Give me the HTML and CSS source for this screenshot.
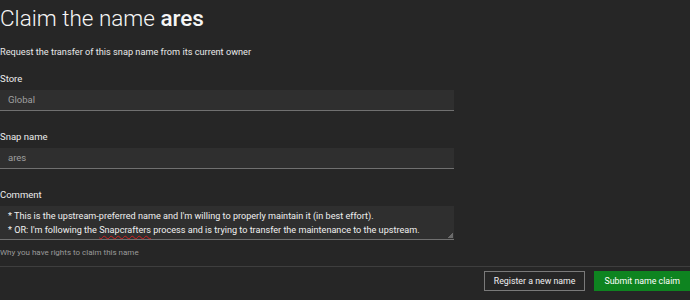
FILE: index.html
```html
<!DOCTYPE html>
<html lang="en">
<head>
<meta charset="utf-8">
<title>Claim the name ares</title>
<link rel="stylesheet" href="styles.css">
</head>
<body>
<main class="page">
  <h1 class="title">Claim the name <strong>ares</strong></h1>
  <p class="lead">Request the transfer of this snap name from its current owner</p>
  <div class="form">
    <div class="field">
      <label class="label">Store</label>
      <div class="input">Global</div>
    </div>
    <div class="field">
      <label class="label">Snap name</label>
      <div class="input">ares</div>
    </div>
    <div class="field">
      <label class="label">Comment</label>
      <div class="textarea">
        <div>* This is the upstream-preferred name and I'm willing to properly maintain it (in best effort).</div>
        <div>* OR: I'm following the <span class="misspelled">Snapcrafters</span> process and is trying to transfer the maintenance to the upstream.</div>
        <span class="grip"></span>
      </div>
      <p class="help">Why you have rights to claim this name</p>
    </div>
  </div>
  <footer class="actions">
    <button class="btn">Register a new name</button>
    <button class="btn btn-primary">Submit name claim</button>
  </footer>
</main>
</body>
</html>
```
FILE: styles.css
```css
html, body {
  margin: 0;
  padding: 0;
  background: #262626;
  color: #f2f2f2;
  font-family: Roboto, "Noto Sans", sans-serif;
}

.page {
  display: flex;
  flex-direction: column;
}

.title {
  margin: 0;
  padding-top: 2px;
  font-size: 22.5px;
  line-height: 32px;
  font-weight: 300;
  color: #f5f5f5;
}

.title strong {
  font-weight: 500;
}

.lead {
  margin: 10px 0 0;
  font-size: 9.2px;
  line-height: 16px;
  color: #e8e8e8;
}

.form {
  display: flex;
  flex-direction: column;
  width: 454px;
  margin-top: 12px;
  gap: 19px;
}

.field {
  display: flex;
  flex-direction: column;
}

.label {
  font-size: 9.5px;
  line-height: 14px;
  color: #ececec;
  margin-bottom: 4px;
}

.input {
  background: #2f2f2f;
  border-bottom: 1px solid #707070;
  height: 20px;
  line-height: 20px;
  padding: 0 8px;
  font-size: 9.5px;
  color: #a0a0a0;
}

.textarea {
  position: relative;
  background: #2f2f2f;
  border-bottom: 1px solid #707070;
  padding: 3px 8px 2px;
  font-size: 9.1px;
  line-height: 14px;
  color: #f0f0f0;
  white-space: nowrap;
}

.misspelled {
  text-decoration: underline wavy #d02020;
  text-decoration-thickness: 1px;
  text-underline-offset: 2px;
}

.grip {
  position: absolute;
  right: 1px;
  bottom: 1px;
  width: 6px;
  height: 6px;
  background: linear-gradient(135deg, transparent 50%, #6a6a6a 50%);
}

.help {
  margin: 7px 0 0;
  font-size: 8px;
  line-height: 12px;
  color: #9a9a9a;
}

.actions {
  display: flex;
  justify-content: flex-end;
  gap: 9px;
  margin-top: 7px;
  padding-top: 4px;
  border-top: 1px solid #3e3e3e;
}

.btn {
  font-family: inherit;
  font-size: 8.8px;
  height: 20px;
  padding: 0 9px;
  background: transparent;
  color: #f0f0f0;
  border: 1px solid #7a7a7a;
  border-radius: 0;
}

.btn-primary {
  background: #0e8420;
  border-color: #0e8420;
  color: #ffffff;
}
```
